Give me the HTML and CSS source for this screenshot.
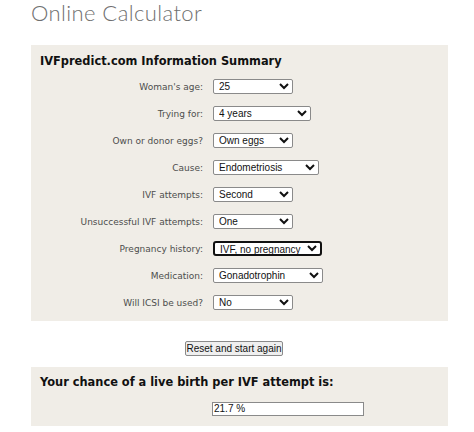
FILE: index.html
```html
<!DOCTYPE html>
<html>
<head>
<meta charset="utf-8">
<link rel="stylesheet" href="styles.css">
</head>
<body>
<h1 class="title">Online Calculator</h1>
<section class="panel summary">
  <h2 class="panel-head">IVFpredict.com Information Summary</h2>
  <div class="row"><label class="lbl">Woman's age:</label><select class="sel w80"><option>25</option></select></div>
  <div class="row"><label class="lbl">Trying for:</label><select class="sel w98"><option>4 years</option></select></div>
  <div class="row"><label class="lbl">Own or donor eggs?</label><select class="sel w80"><option>Own eggs</option></select></div>
  <div class="row"><label class="lbl">Cause:</label><select class="sel w106"><option>Endometriosis</option></select></div>
  <div class="row"><label class="lbl">IVF attempts:</label><select class="sel w80"><option>Second</option></select></div>
  <div class="row"><label class="lbl">Unsuccessful IVF attempts:</label><select class="sel w80"><option>One</option></select></div>
  <div class="row"><label class="lbl">Pregnancy history:</label><select class="sel w109 focused"><option>IVF, no pregnancy</option></select></div>
  <div class="row"><label class="lbl">Medication:</label><select class="sel w110"><option>Gonadotrophin</option></select></div>
  <div class="row"><label class="lbl">Will ICSI be used?</label><select class="sel w80"><option>No</option></select></div>
</section>
<div class="actions"><button class="reset">Reset and start again</button></div>
<section class="panel result">
  <h2 class="panel-head">Your chance of a live birth per IVF attempt is:</h2>
  <div class="result-row"><input class="out" type="text" value="21.7 %"></div>
</section>
</body>
</html>
```
FILE: styles.css
```css
html, body {
  margin: 0;
  padding: 0;
  background: #ffffff;
}
body {
  width: 474px;
  height: 432px;
  overflow: hidden;
}
.title {
  margin: 0;
  padding: 0 0 0 31px;
  font-family: "Lato", "DejaVu Sans", sans-serif;
  font-weight: 300;
  font-size: 22px;
  letter-spacing: 0.4px;
  line-height: 25px;
  color: #6f6f6f;
  height: 45px;
  box-sizing: border-box;
}
.panel {
  margin-left: 31px;
  width: 417px;
  background: #f0ede7;
  box-sizing: border-box;
}
.summary {
  padding: 0 0 5px 0;
}
.panel-head {
  margin: 0;
  padding: 9px 0 0 9px;
  font-family: "DejaVu Sans", Verdana, sans-serif;
  font-weight: bold;
  font-size: 11.4px;
  line-height: 14px;
  color: #111;
}
.summary .panel-head {
  height: 28px;
  box-sizing: border-box;
}
.row {
  display: grid;
  grid-template-columns: 172px auto;
  column-gap: 10px;
  align-items: center;
  height: 27px;
}
.lbl {
  text-align: right;
  font-family: "DejaVu Sans", Verdana, sans-serif;
  font-size: 9px;
  color: #4d4d4d;
}
.sel {
  height: 15px;
  font-family: "Liberation Sans", Arial, sans-serif;
  font-size: 10px;
  padding: 0 1px;
  margin: 0;
  border: 1px solid #8a8a8a;
  border-radius: 2px;
  background-color: #fff;
  color: #111;
  justify-self: start;
}
.w80 { width: 80px; }
.w98 { width: 98px; }
.w106 { width: 106px; }
.w109 { width: 109px; }
.w110 { width: 110px; }
.focused {
  border: 2px solid #111;
  border-radius: 3px;
}
.actions {
  padding: 17px 0 14px 154px;
  margin-left: 31px;
  height: 46px;
  box-sizing: border-box;
}
.reset {
  height: 15px;
  width: 98px;
  padding: 0;
  font-family: "Liberation Sans", Arial, sans-serif;
  font-size: 10px;
  border: 1px solid #8a8a8a;
  border-radius: 2px;
  background: #efefef;
  color: #111;
}
.result {
  height: 59px;
  padding-top: 1px;
}
.result .panel-head {
  padding-top: 7px;
}
.result-row {
  padding: 9px 0 0 181px;
}
.out {
  width: 152px;
  height: 14px;
  box-sizing: border-box;
  padding: 0 1px;
  font-family: "Liberation Sans", Arial, sans-serif;
  font-size: 10px;
  border: 1px solid #8a8a8a;
  background: #fff;
  color: #111;
}
```
